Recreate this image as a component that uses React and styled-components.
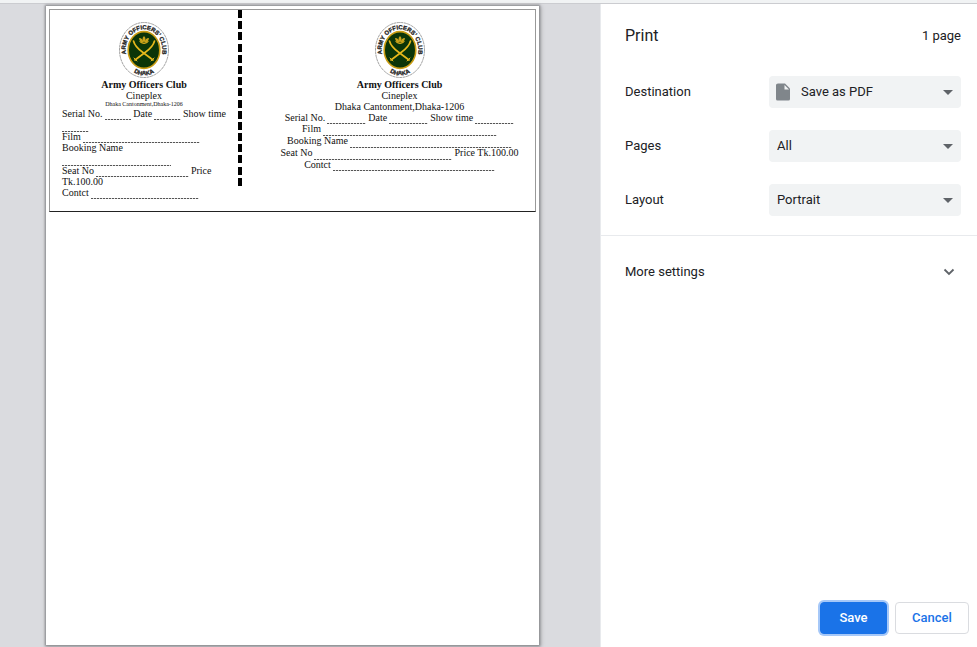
import React from 'react';
import styled, { createGlobalStyle } from 'styled-components';

const GlobalStyle = createGlobalStyle`
  *, *::before, *::after { box-sizing: border-box; }
  body {
    margin: 0;
    background: #fff;
    color: #202124;
    font-family: Roboto, "Liberation Sans", sans-serif;
    font-size: 13px;
    line-height: 20px;
  }
`;

const Window = styled.div`
  display: flex;
  flex-direction: column;
  min-height: 100vh;
`;

const TopStrip = styled.div`
  height: 4px;
  background: #f1f3f4;
  border-bottom: 1px solid #cbccd0;
`;

const Dialog = styled.div`
  flex: 1;
  display: flex;
`;

const Preview = styled.main`
  flex: 1;
  display: flex;
  padding: 2px 61px 2px 46px;
  background: #dadbdf;
`;

const Paper = styled.article`
  flex: 1;
  padding: 3px;
  background: #fff;
  color: #111;
  box-shadow: 0 0 2px 1px #8c8d90, 1px 1px 4px 1px #a3a4a8;
  font-family: "Liberation Serif", serif;
  font-size: 10px;
  line-height: 11px;
`;

const Ticket = styled.section`
  display: flex;
  min-height: 203px;
  border: 1px solid #999;
  border-bottom: 1px solid #222;
`;

const Stub = styled.div`
  width: 188px;
  padding: 12px 12px 0;
`;

const Tear = styled.div`
  display: flex;
  flex-direction: column;
  justify-content: space-between;
  width: 4px;
  height: 176px;
`;

const Dash = styled.span`
  height: 8px;
  background: #000;
`;

const Counterfoil = styled.div`
  flex: 1;
  padding: 12px 12px 0 34px;
`;

const Heading = styled.header`
  display: flex;
  flex-direction: column;
  align-items: center;
`;

const Emblem = styled.svg`
  width: 50px;
  height: 56px;
  margin-bottom: 1px;
  overflow: visible;
`;

const ClubName = styled.h1`
  margin: 0;
  font-size: 10px;
  line-height: 11px;
`;

const Address = styled.div`
  font-size: ${(p) => (p.$small ? '6px' : '10px')};
  line-height: ${(p) => (p.$small ? '7px' : '11px')};
`;

const Line = styled.div`
  display: flex;
  align-items: baseline;
  justify-content: ${(p) => (p.$centered ? 'center' : 'flex-start')};
  gap: 2px;
  height: ${(p) => (p.$tall ? '12px' : '11px')};
  line-height: ${(p) => (p.$tall ? '12px' : '11px')};
  white-space: nowrap;
`;

const Blank = styled.span`
  align-self: flex-end;
  width: ${(p) => p.$w}px;
  height: 1px;
  margin-bottom: -1px;
  background: repeating-linear-gradient(90deg, #555 0 2px, #ddd 2px 3px);
`;

const Sidebar = styled.aside`
  display: flex;
  flex-direction: column;
  width: 377px;
  border-left: 1px solid #e8eaed;
`;

const PrintHeader = styled.header`
  display: flex;
  align-items: center;
  justify-content: space-between;
  height: 61px;
  padding: 3px 16px 0 24px;
`;

const PrintTitle = styled.h2`
  margin: 0;
  font-size: 16px;
  font-weight: 400;
`;

const Settings = styled.div`
  padding-bottom: 8px;
  border-bottom: 1px solid #e8eaed;
`;

const Setting = styled.label`
  display: flex;
  align-items: center;
  justify-content: space-between;
  min-height: 54px;
  padding: 0 16px 0 24px;
`;

const SelectBox = styled.span`
  display: grid;
  grid-template-columns: 32px 1fr 34px;
  align-items: center;
  width: 192px;
  height: 32px;
  border-radius: 4px;
  background: #f1f3f4;
`;

const Select = styled.select`
  grid-area: 1 / 1 / 2 / 4;
  width: 100%;
  height: 32px;
  padding: 0 26px 0 ${(p) => (p.$withIcon ? '32px' : '8px')};
  border: 0;
  border-radius: 4px;
  background: transparent;
  color: #202124;
  font: inherit;
  appearance: none;
`;

const FileIcon = styled.svg`
  grid-area: 1 / 1 / 2 / 2;
  justify-self: center;
  width: 14px;
  height: 18px;
  margin-right: 4px;
  pointer-events: none;
`;

const Arrow = styled.svg`
  grid-area: 1 / 3 / 2 / 4;
  justify-self: end;
  width: 10px;
  height: 5px;
  margin-right: 8px;
  pointer-events: none;
`;

const MoreButton = styled.button`
  display: flex;
  align-items: center;
  justify-content: space-between;
  height: 72px;
  padding: 0 22px 0 24px;
  border: 0;
  background: none;
  color: inherit;
  font: inherit;
`;

const Chevron = styled.svg`
  width: 12px;
  height: 8px;
`;

const Actions = styled.footer`
  display: flex;
  justify-content: flex-end;
  gap: 8px;
  margin-top: auto;
  padding: 0 8px 13px;
`;

const Button = styled.button`
  height: 32px;
  padding: 0 16px;
  min-width: ${(p) => (p.$primary ? '67px' : '74px')};
  border: 1px solid ${(p) => (p.$primary ? '#1a73e8' : '#dadce0')};
  border-radius: 4px;
  background: ${(p) => (p.$primary ? '#1a73e8' : '#fff')};
  color: ${(p) => (p.$primary ? '#fff' : '#1a73e8')};
  box-shadow: ${(p) => (p.$primary ? '0 0 0 2px #a6c8f8' : 'none')};
  font: 500 13px/20px Roboto, "Liberation Sans", sans-serif;
`;

function Logo({ id }) {
  return (
    <Emblem viewBox="0 0 50 56" role="img" aria-label="Army Officers' Club Dhaka">
      <defs>
        <path id={`${id}-top`} d="M7.4 34 A18.4 20.6 0 1 1 42.6 34" />
        <path id={`${id}-bottom`} d="M9 44.5 A21 25.5 0 0 0 41 44.5" />
      </defs>
      <ellipse cx="25" cy="28" rx="24.5" ry="27.5" fill="#fff" stroke="#8a8a8a" strokeWidth=".8" strokeDasharray="3 .5" />
      <ellipse cx="25" cy="28" rx="15.8" ry="18.4" fill="#0b3508" stroke="#c99c14" strokeWidth="1.6" />
      <g fontFamily="'Liberation Sans Narrow', 'Liberation Sans', sans-serif" fontWeight="700" fontSize="6" fill="#222" stroke="#222" strokeWidth=".3" textAnchor="middle">
        <text><textPath href={`#${id}-top`} startOffset="50%">ARMY OFFICERS’ CLUB</textPath></text>
        <text><textPath href={`#${id}-bottom`} startOffset="50%">DHAKA</textPath></text>
      </g>
      <g fill="none" stroke="#e6b81c" strokeLinecap="round">
        <path d="M14.5 19 Q16 25 24 30.5 L34 38" strokeWidth="1.7" />
        <path d="M35.5 19 Q34 25 26 30.5 L16 38" strokeWidth="1.7" />
        <path d="M15 36 l3 3 M35 36 l-3 3" strokeWidth="1" />
      </g>
      <g fill="#c9a21a">
        <path d="M25 14 Q28 17 25 21 Q22 17 25 14Z" />
        <path d="M20 16 Q24 16 24.5 21 Q20.5 20.5 20 16Z M30 16 Q26 16 25.5 21 Q29.5 20.5 30 16Z" />
        <path d="M20 19 Q22 18.5 24 21 H26 Q28 18.5 30 19 Q28 22.5 25 22 Q22 22.5 20 19Z" />
      </g>
    </Emblem>
  );
}

function TicketHeading({ id, small }) {
  return (
    <Heading>
      <Logo id={id} />
      <ClubName>Army Officers Club</ClubName>
      <div>Cineplex</div>
      <Address $small={small}>Dhaka Cantonment,Dhaka-1206</Address>
    </Heading>
  );
}

function DropDown({ label, value, icon }) {
  return (
    <Setting>
      {label}
      <SelectBox>
        <Select $withIcon={icon} defaultValue={value}>
          <option>{value}</option>
        </Select>
        {icon && (
          <FileIcon viewBox="0 0 14 18" aria-hidden="true">
            <path d="M2 .5H9L14 5.5V16Q14 17.5 12.5 17.5H1.5Q0 17.5 0 16V2Q0 .5 2 .5Z" fill="#80868b" />
            <path d="M8.5 2V6.5H13Z" fill="#f1f3f4" />
          </FileIcon>
        )}
        <Arrow viewBox="0 0 10 5" aria-hidden="true">
          <path d="M0 0H10L5 5Z" fill="#5f6368" />
        </Arrow>
      </SelectBox>
    </Setting>
  );
}

export default function App() {
  return (
    <Window>
      <GlobalStyle />
      <TopStrip />
      <Dialog>
        <Preview>
          <Paper>
            <Ticket>
              <Stub>
                <TicketHeading id="stub" small />
                <Line>Serial No. <Blank $w={27} /> Date <Blank $w={27} /> Show time</Line>
                <Line $tall><Blank $w={27} /></Line>
                <Line>Film <Blank $w={117} /></Line>
                <Line>Booking Name</Line>
                <Line $tall><Blank $w={109} /></Line>
                <Line>Seat No <Blank $w={93} /> Price</Line>
                <Line>Tk.100.00</Line>
                <Line>Contct <Blank $w={108} /></Line>
              </Stub>
              <Tear>
                {Array.from({ length: 16 }, (_, i) => <Dash key={i} />)}
              </Tear>
              <Counterfoil>
                <TicketHeading id="counterfoil" />
                <Line $centered>Serial No. <Blank $w={39} /> Date <Blank $w={39} /> Show time <Blank $w={39} /></Line>
                <Line $centered $tall>Film <Blank $w={174} /></Line>
                <Line $centered $tall>Booking Name <Blank $w={162} /></Line>
                <Line $centered $tall>Seat No <Blank $w={138} /> Price Tk.100.00</Line>
                <Line $centered>Contct <Blank $w={162} /></Line>
              </Counterfoil>
            </Ticket>
          </Paper>
        </Preview>
        <Sidebar>
          <PrintHeader>
            <PrintTitle>Print</PrintTitle>
            <span>1 page</span>
          </PrintHeader>
          <Settings>
            <DropDown label="Destination" value="Save as PDF" icon />
            <DropDown label="Pages" value="All" />
            <DropDown label="Layout" value="Portrait" />
          </Settings>
          <MoreButton type="button" aria-expanded="false">
            More settings
            <Chevron viewBox="0 0 12 8" aria-hidden="true">
              <path d="M1.5 1.5L6 6L10.5 1.5" fill="none" stroke="#5f6368" strokeWidth="1.8" />
            </Chevron>
          </MoreButton>
          <Actions>
            <Button type="button" $primary>Save</Button>
            <Button type="button">Cancel</Button>
          </Actions>
        </Sidebar>
      </Dialog>
    </Window>
  );
}
